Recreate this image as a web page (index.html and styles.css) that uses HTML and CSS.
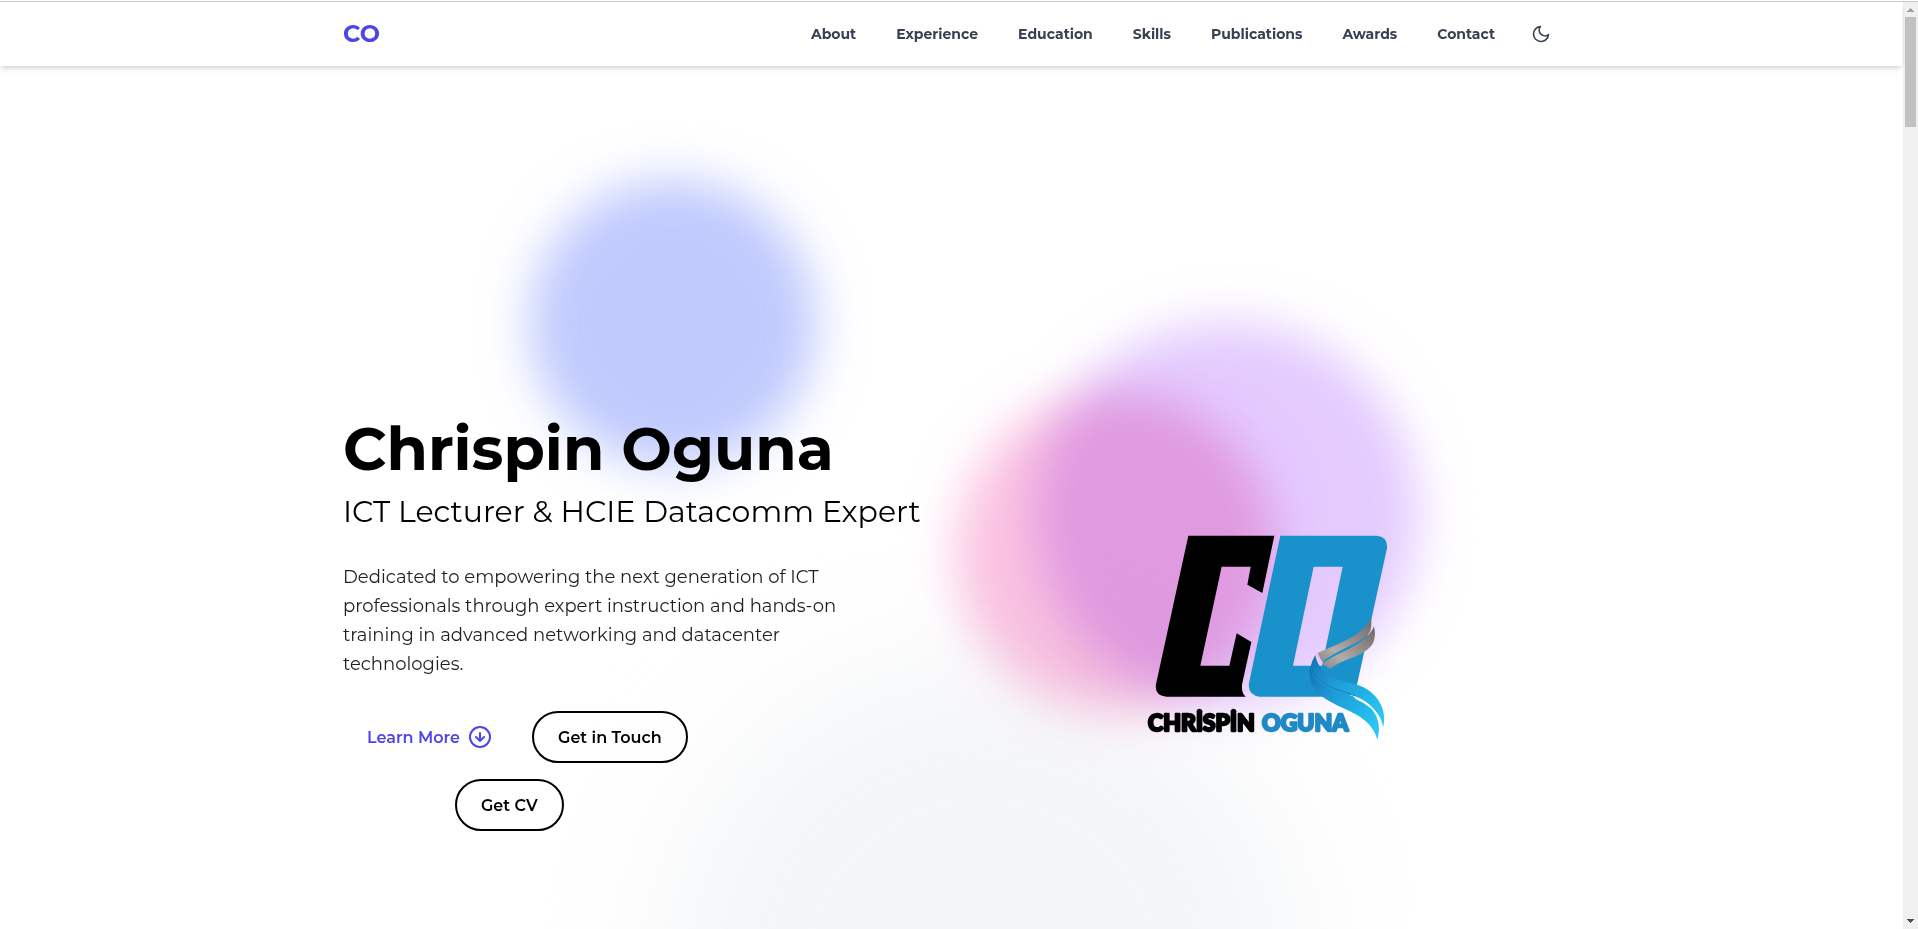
FILE: index.html
```html
<!DOCTYPE html>
<html lang="en">
<head>
<meta charset="utf-8">
<meta name="viewport" content="width=device-width, initial-scale=1">
<title>Chrispin Oguna</title>
<link rel="stylesheet" href="styles.css">
</head>
<body>
<div class="page">
  <header class="header">
    <div class="container header-row">
      <a class="brand" href="#top">CO</a>
      <nav class="nav" aria-label="Main">
        <a href="#about">About</a>
        <a href="#experience">Experience</a>
        <a href="#education">Education</a>
        <a href="#skills">Skills</a>
        <a href="#publications">Publications</a>
        <a href="#awards">Awards</a>
        <a href="#contact">Contact</a>
        <button class="theme-toggle" type="button" aria-label="Toggle dark mode">
          <svg viewBox="0 0 24 24" fill="none" stroke="currentColor" stroke-width="2" stroke-linecap="round" stroke-linejoin="round"><path d="M21 12.79A9 9 0 1 1 11.21 3 7 7 0 0 0 21 12.79z"/></svg>
        </button>
      </nav>
    </div>
  </header>

  <main class="hero" id="top">
    <div class="backdrop" aria-hidden="true">
      <div class="blobs">
        <div class="blob blob-gray"></div>
        <div class="blob blob-purple"></div>
        <div class="blob blob-pink"></div>
        <div class="blob blob-indigo"></div>
      </div>
    </div>
    <div class="container hero-row">
      <section class="intro">
        <h1>Chrispin Oguna</h1>
        <p class="role">ICT Lecturer &amp; HCIE Datacomm Expert</p>
        <p class="summary">Dedicated to empowering the next generation of ICT<br>professionals through expert instruction and hands-on<br>training in advanced networking and datacenter<br>technologies.</p>
        <div class="actions">
          <div class="action-row">
            <a class="button button-text" href="#about">Learn More
              <svg viewBox="0 0 24 24" fill="none" stroke="currentColor" stroke-width="2" stroke-linecap="round" stroke-linejoin="round"><circle cx="12" cy="12" r="10"/><path d="M12 8v8M8 12l4 4 4-4"/></svg>
            </a>
            <a class="button" href="#contact">Get in Touch</a>
          </div>
          <div class="action-row action-row-second">
            <a class="button" href="#cv">Get CV</a>
          </div>
        </div>
      </section>
      <div class="logo-column">
        <svg class="logo" viewBox="0 0 840 690" role="img" aria-label="Chrispin Oguna logo">
          <defs>
            <linearGradient id="silver" x1="0" y1="1" x2="1" y2="0"><stop offset="0" stop-color="#8b8785"/><stop offset=".3" stop-color="#b3aca8"/><stop offset=".6" stop-color="#948e8b"/><stop offset="1" stop-color="#6b6968"/></linearGradient>
            <linearGradient id="wave" x1="0" y1="0" x2="1" y2="1"><stop offset="0" stop-color="#126fb0"/><stop offset=".3" stop-color="#1e95d3"/><stop offset=".7" stop-color="#22b8e9"/><stop offset="1" stop-color="#32ccf5"/></linearGradient>
          </defs>
          <path d="M175 50H433L397 222 352 197 362 143H275L211 440H298L320 343 364 369 337 492Q332 520 347 533H110Q73 530 78 496Z"/>
          <path fill="#1991ca" fill-rule="evenodd" d="M451 50H740Q774 53 771 88L680 502 655 533H390Q352 528 357 492ZM551 143 489 440H576L638 143Z"/>
          <path fill="url(#silver)" d="M558 404C618 376 700 352 723 296Q727 324 718 342C684 376 622 394 576 428Z"/>
          <path fill="url(#silver)" d="M576 434C630 396 706 380 732 322Q739 350 729 373C703 414 646 416 600 449Z"/>
          <path fill="none" stroke="#e3c8ff" stroke-width="7" d="M558 400 575 434"/>
          <path fill="url(#wave)" d="M556 408C568 476 640 487 684 498C734 514 774 565 760 624C750 575 710 547 670 530C610 518 530 500 540 448Q545 425 556 408Z"/>
          <path fill="url(#wave)" d="M540 450C555 510 625 513 669 532C720 552 762 596 742 662C729 613 690 590 645 570C590 543 532 520 540 450Z"/>
          <path fill="#fff" d="M669 530Q723 545 756 606 728 562 678 541Z"/>
          <path fill="none" stroke="#126fb0" stroke-width="2" d="M544 444C561 503 625 510 675 530"/>
          <text class="logo-name" x="54" y="637">CHRİSPİN</text>
          <text class="logo-name logo-surname" x="396" y="635">OGUNA</text>
        </svg>
      </div>
    </div>
  </main>
</div>
<div class="scrollbar" aria-hidden="true">
  <svg class="arrow arrow-up" viewBox="0 0 7 4" shape-rendering="crispEdges"><path d="M3 0h1v1h1v1h1v1h1v1H0V3h1V2h1V1h1z"/></svg>
  <div class="thumb"></div>
  <svg class="arrow arrow-down" viewBox="0 0 7 4" shape-rendering="crispEdges"><path d="M0 0h7v1H6v1H5v1H4v1H3V3H2V2H1V1H0z"/></svg>
</div>
</body>
</html>
```
FILE: styles.css
```css
* { box-sizing: border-box; }

html {
  padding-top: 1px;
  background: #fff;
}

body {
  margin: 0;
  min-height: calc(100vh - 1px);
  display: grid;
  grid-template-columns: minmax(0, 1fr) 15px;
  column-gap: 1px;
  border-top: 1px solid #c8c9c9;
  color: #000;
  font-family: Montserrat, Inter, "Open Sans", sans-serif;
}

h1, p { margin: 0; }
a { color: inherit; text-decoration: none; }

.page {
  display: flex;
  flex-direction: column;
}

.container {
  width: 100%;
  max-width: 1280px;
  margin: 0 auto;
  padding: 0 32px;
}

.header {
  position: relative;
  z-index: 2;
  background: #fff;
  box-shadow: 0 4px 6px -1px rgba(0, 0, 0, .1), 0 2px 4px -1px rgba(0, 0, 0, .1);
}

.header-row {
  display: flex;
  align-items: center;
  justify-content: space-between;
  height: 64px;
  padding-bottom: 1px;
}

.brand {
  color: #4f46e5;
  font-size: 24px;
  font-weight: 700;
}

.nav {
  display: flex;
  align-items: center;
  gap: 40px;
  color: #374151;
  font-size: 14px;
  font-weight: 700;
}

.theme-toggle {
  display: flex;
  margin-left: -12px;
  padding: 8px;
  border: 0;
  background: none;
  color: inherit;
}

.theme-toggle svg { width: 20px; height: 20px; }

.hero {
  position: relative;
  flex: 1;
}

.backdrop {
  position: absolute;
  inset: 0;
  overflow: hidden;
}

.blobs {
  position: relative;
  max-width: 1280px;
  height: 100%;
  margin: 0 auto;
}

.blob {
  position: absolute;
  border-radius: 50%;
  opacity: .7;
  filter: blur(24px);
  mix-blend-mode: multiply;
}

.blob-indigo {
  left: 218px;
  top: 113px;
  width: 288px;
  height: 288px;
  background: #a5b4fc;
}

.blob-purple {
  left: 724px;
  top: 256px;
  width: 384px;
  height: 384px;
  background: #d8b4fe;
}

.blob-pink {
  left: 645px;
  top: 326px;
  width: 320px;
  height: 320px;
  background: #f9a8d4;
}

.blob-gray {
  left: 352px;
  top: 590px;
  width: 640px;
  height: 640px;
  background: #eff1f4;
  filter: blur(64px);
}

.hero-row {
  position: relative;
  display: grid;
  grid-template-columns: 1fr 1fr;
  padding-top: 347px;
}

.intro h1 {
  font-size: 60px;
  font-weight: 700;
  line-height: 72px;
  white-space: nowrap;
}

.role {
  margin-top: 7px;
  font-size: 30px;
  font-weight: 400;
  line-height: 40px;
  white-space: nowrap;
}

.summary {
  margin-top: 31px;
  color: #1f1f1f;
  font-size: 18px;
  line-height: 29px;
}

.actions {
  display: flex;
  flex-direction: column;
  gap: 16px;
  margin-top: 32px;
}

.action-row {
  display: flex;
  gap: 16px;
}

.action-row-second { padding-left: 112px; }

.button {
  display: flex;
  align-items: center;
  gap: 8px;
  height: 52px;
  padding: 0 24px;
  border: 2px solid #000;
  border-radius: 26px;
  font-size: 16px;
  font-weight: 600;
}

.button-text {
  border: 0;
  color: #4f46e5;
}

.button-text svg { width: 24px; height: 24px; }

.logo-column {
  padding-top: 106px;
  padding-left: 179px;
}

.logo { display: block; width: 280px; }

.logo-name {
  fill: #000;
  stroke: #000;
  stroke-width: 7px;
  stroke-linejoin: round;
  font-family: Lato, sans-serif;
  font-size: 69px;
  font-weight: 900;
}

.logo-surname {
  fill: #1f8ac6;
  stroke: #1f8ac6;
}

.scrollbar {
  display: flex;
  flex-direction: column;
  align-items: center;
  padding: 6px 0;
  background: #f0f0f0;
}

.arrow { width: 7px; height: 4px; }
.arrow-up { fill: #a0a0a0; }
.arrow-down { margin-top: auto; fill: #505050; }

.thumb {
  width: 11px;
  height: 110px;
  margin-top: 5px;
  background: #c1c1c1;
}
```
